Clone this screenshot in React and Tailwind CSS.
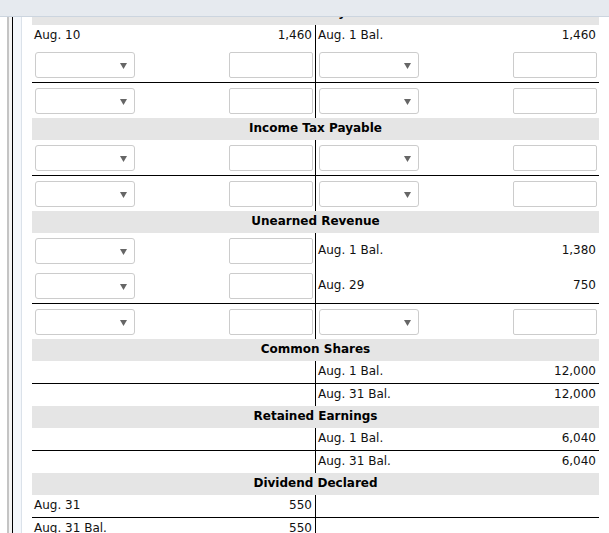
import React from "react";

const Sel = () => (
  <div className="relative w-[100px] h-[26px] border border-[#cccccc] rounded-[3px] bg-white">
    <svg className="absolute right-[7px] top-[10px]" width="7" height="6" viewBox="0 0 7 6">
      <polygon points="0,0 7,0 3.5,6" fill="#666666" />
    </svg>
  </div>
);

const Inp = () => (
  <div className="w-[84px] h-[26px] border border-[#cccccc] rounded-[2px] bg-white" />
);

function Half({ cell, left }) {
  const base = left ? "w-[284px] border-r border-black" : "flex-1";
  if (cell === "in") {
    return (
      <div className={`${base} flex`}>
        <div className="flex-1 flex items-center pl-[3px]">
          <Sel />
        </div>
        <div className="w-[90px] flex items-center justify-end pr-[2px]">
          <Inp />
        </div>
      </div>
    );
  }
  if (Array.isArray(cell)) {
    return (
      <div className={`${base} flex`}>
        <div className="flex-1 flex items-center pl-[2px] pb-[2px]">{cell[0]}</div>
        <div className="w-[90px] flex items-center justify-end pr-[3px] pb-[2px]">{cell[1]}</div>
      </div>
    );
  }
  return <div className={base} />;
}

function Row({ l, r, bal, h }) {
  return (
    <div className={`flex ${h} ${bal ? "border-t border-black" : ""}`}>
      <Half cell={l} left />
      <Half cell={r} />
    </div>
  );
}

const Head = ({ title, first }) => (
  <div
    className={`h-[22px] bg-[#e5e5e5] flex items-center justify-center font-bold text-black ${
      first ? "pb-[5px]" : "pb-[2px]"
    }`}
  >
    {title}
  </div>
);

export default function App() {
  return (
    <div
      className="relative w-[609px] h-[533px] overflow-hidden bg-white text-[12px] text-[#111111]"
      style={{ fontFamily: '"DejaVu Sans", Verdana, sans-serif' }}
    >
      <div className="absolute top-0 left-0 right-0 h-[17px] bg-[#e6eaef] border-b border-[#ccd5df] z-10" />
      <div className="flex h-full">
        <div className="w-[7px] shrink-0" />
        <div className="w-[2px] shrink-0 bg-[#c4c4c4]" />
        <div className="w-[3px] shrink-0 bg-[#f4f4f4]" />
        <div className="w-[1px] shrink-0 bg-black" />
        <div className="w-[8px] shrink-0 bg-[#f4f7fb]" />
        <div className="w-[1px] shrink-0 bg-[#dbe2ea]" />
        <div className="w-[10px] shrink-0" />
        <div className="w-[567px] shrink-0 mt-[3px]">
          <Head title="Accounts Payable" first />
          <Row l={["Aug. 10", "1,460"]} r={["Aug. 1 Bal.", "1,460"]} h="h-[22px]" />
          <Row l="in" r="in" h="h-[35px]" />
          <Row l="in" r="in" bal h="h-[36px]" />

          <Head title="Income Tax Payable" />
          <Row l="in" r="in" h="h-[35px]" />
          <Row l="in" r="in" bal h="h-[36px]" />

          <Head title="Unearned Revenue" />
          <Row l="in" r={["Aug. 1 Bal.", "1,380"]} h="h-[35px]" />
          <Row l="in" r={["Aug. 29", "750"]} h="h-[35px]" />
          <Row l="in" r="in" bal h="h-[36px]" />

          <Head title="Common Shares" />
          <Row l={null} r={["Aug. 1 Bal.", "12,000"]} h="h-[22px]" />
          <Row l={null} r={["Aug. 31 Bal.", "12,000"]} bal h="h-[23px]" />

          <Head title="Retained Earnings" />
          <Row l={null} r={["Aug. 1 Bal.", "6,040"]} h="h-[22px]" />
          <Row l={null} r={["Aug. 31 Bal.", "6,040"]} bal h="h-[23px]" />

          <Head title="Dividend Declared" />
          <Row l={["Aug. 31", "550"]} r={null} h="h-[22px]" />
          <Row l={["Aug. 31 Bal.", "550"]} r={null} bal h="h-[23px]" />
        </div>
      </div>
    </div>
  );
}
